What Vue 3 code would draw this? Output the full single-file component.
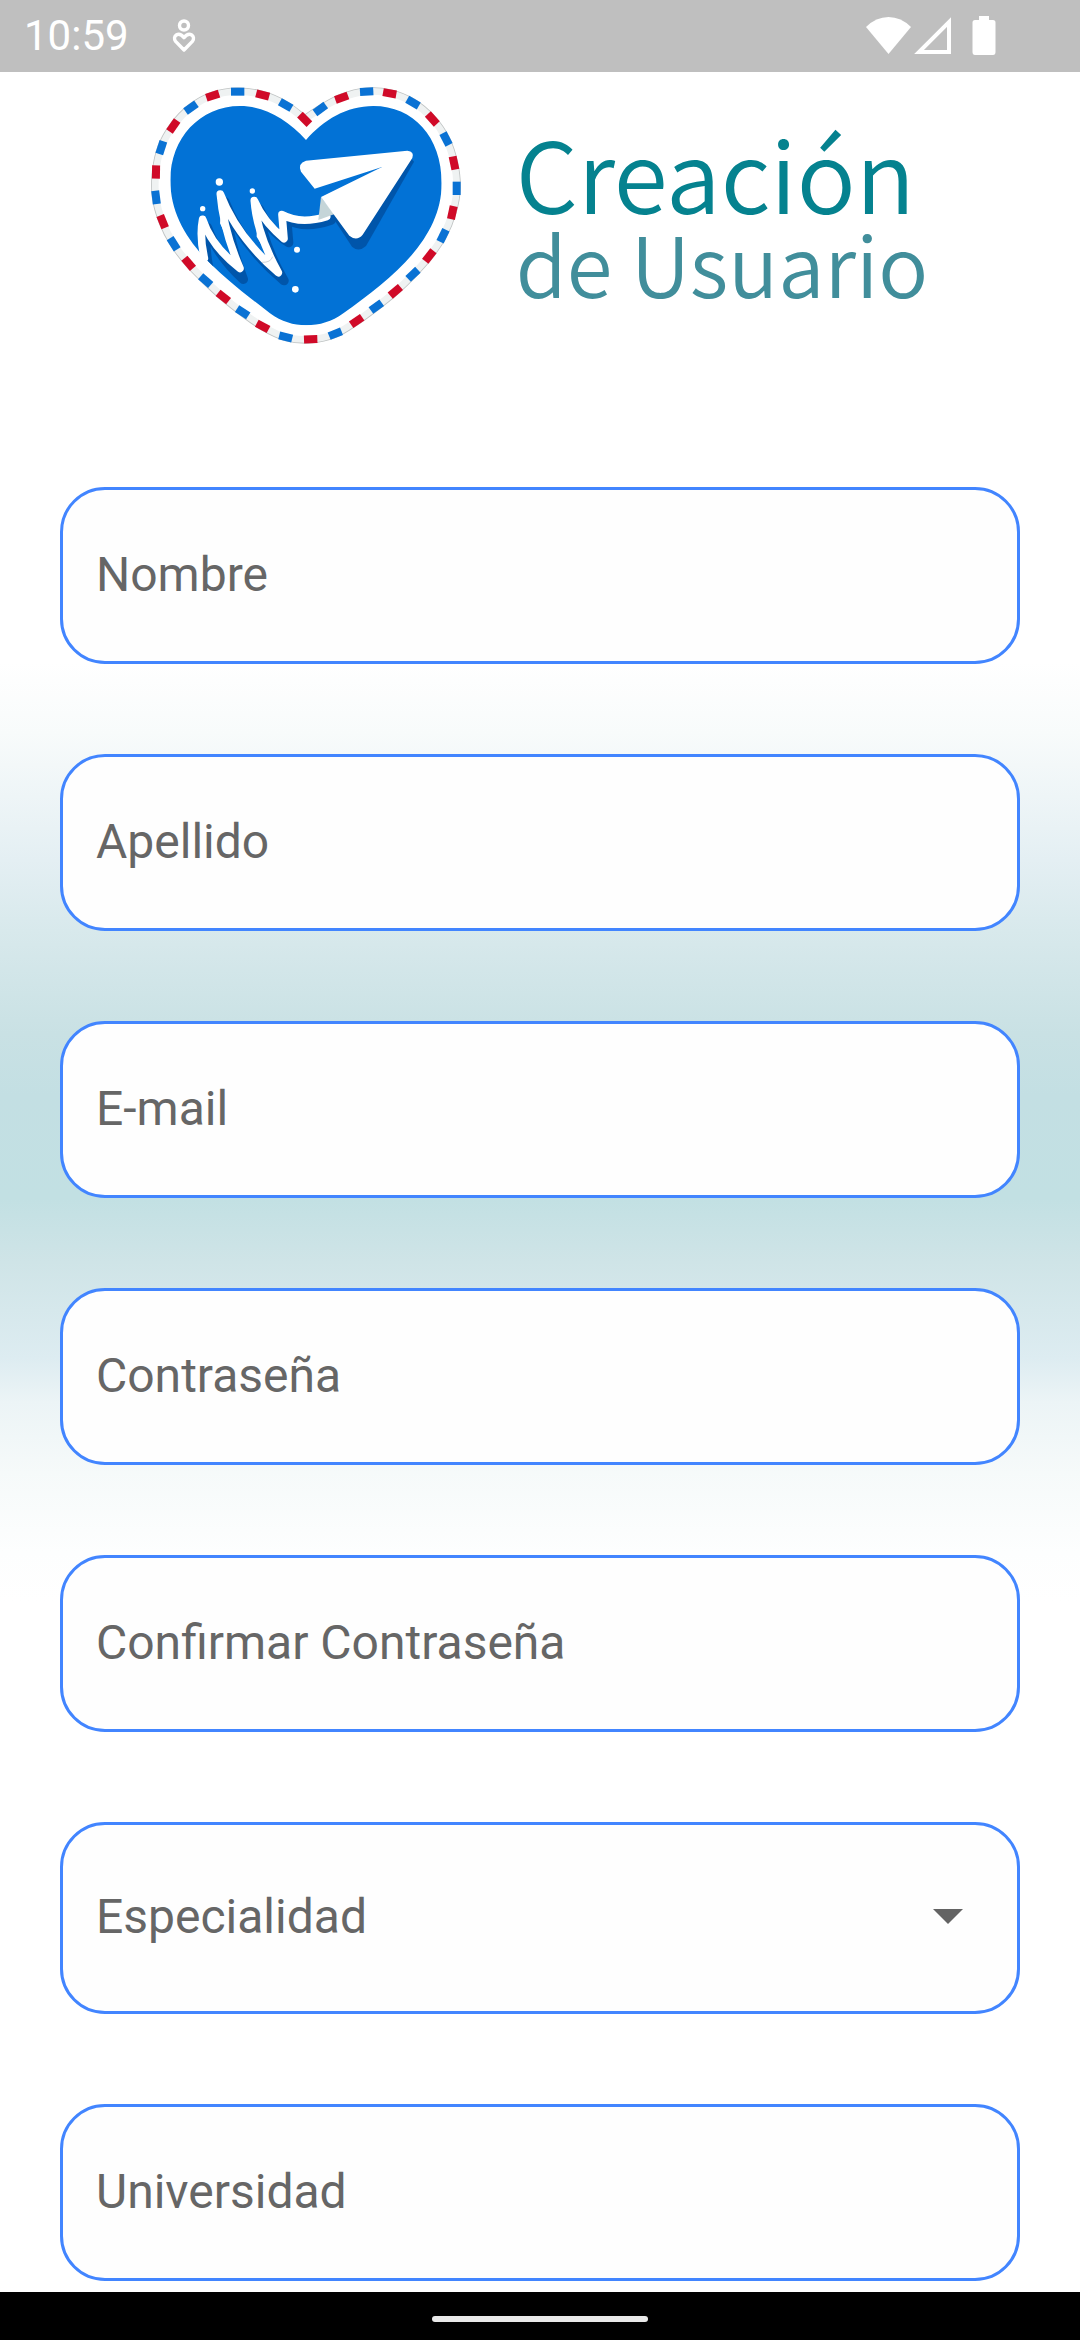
<script setup>
import { reactive } from 'vue'

const fields = [
  { id: 'nombre', label: 'Nombre', type: 'text' },
  { id: 'apellido', label: 'Apellido', type: 'text' },
  { id: 'email', label: 'E-mail', type: 'email' },
  { id: 'clave', label: 'Contraseña', type: 'password' },
  { id: 'clave2', label: 'Confirmar Contraseña', type: 'password' },
  { id: 'especialidad', label: 'Especialidad', type: 'select' },
  { id: 'universidad', label: 'Universidad', type: 'text' },
]

const form = reactive(Object.fromEntries(fields.map((f) => [f.id, ''])))

// Airmail stripes round the heart, clockwise from the notch: x, y, angle
const stripes = [
  [494, 148, 45], [541, 117, -36], [605, 83, -20], [680, 65, -3], [749, 70, 10],
  [819, 98, 30], [877, 147, 48], [918, 207, 63], [942, 279, 78], [950, 355, 90],
  [937, 428, 102], [909, 497, 116], [868, 558, -52], [819, 613, -43], [766, 664, -40],
  [709, 710, -36], [650, 753, -34], [586, 791, -22], [512, 808, -2], [437, 801, 14],
  [368, 769, 28], [308, 727, 33], [250, 681, 38], [197, 632, 41], [146, 580, 50],
  [101, 521, 58], [68, 455, 68], [48, 382, 83], [48, 306, 91], [64, 233, 108],
  [100, 168, -55], [153, 113, -35], [218, 77, -18], [293, 65, 0], [368, 75, 15],
  [437, 105, 30],
]

// Smooth curve through the stripe centres, with a sharp corner at the notch
function ribbon(points) {
  const p = [...points, points[0]]
  let d = `M${p[0][0]} ${p[0][1]}`
  for (let i = 0; i < p.length - 1; i++) {
    const a = p[Math.max(i - 1, 0)]
    const b = p[i]
    const c = p[i + 1]
    const e = p[Math.min(i + 2, p.length - 1)]
    d += `C${b[0] + (c[0] - a[0]) / 6} ${b[1] + (c[1] - a[1]) / 6} ${c[0] - (e[0] - b[0]) / 6} ${c[1] - (e[1] - b[1]) / 6} ${c[0]} ${c[1]}`
  }
  return d
}
const ribbonPath = ribbon(stripes)
</script>

<template>
  <div class="screen">
    <header class="status">
      <time class="clock">10:59</time>
      <svg class="person" viewBox="0 0 24 34" fill="none" stroke="#fff" stroke-width="3.4" aria-hidden="true">
        <circle cx="12" cy="6.5" r="4.5" />
        <path d="M12 31 L3.6 22.4 C-.2 17.5 6.4 11.5 12 18.6 C17.6 11.5 24.2 17.5 20.4 22.4 Z" stroke-linejoin="round" />
      </svg>
      <div class="signals">
        <svg width="46" height="40" viewBox="0 0 46 40" fill="#fff" aria-hidden="true">
          <path d="M0 11 Q10 1 22.5 1 Q35 1 45 11 L22.5 38 Z" />
        </svg>
        <svg width="40" height="40" viewBox="-2 0 40 40" fill="none" stroke="#fff" stroke-width="4" aria-hidden="true">
          <path d="M5 36 L35 36 L35 6 Z" />
        </svg>
        <svg class="battery" width="24" height="40" viewBox="0 0 24 40" fill="#fff" aria-hidden="true">
          <path d="M7 0 H17 V4 H21 Q23.5 4 23.5 6.5 V36 Q23.5 39 21 39 H3 Q.5 39 .5 36 V6.5 Q.5 4 3 4 H7 Z" />
        </svg>
      </div>
    </header>

    <main class="page">
      <div class="brand">
        <svg class="heart" viewBox="0 6 1020 870" role="img" aria-label="Corazón con avión de papel">
          <defs>
            <clipPath id="heart-clip">
              <path d="M498 210C440 145 370 108 300 108C180 108 91 205 91 330C91 510 250 620 390 730C425 755 460 766 498 766C540 766 575 755 610 730C750 630 905 510 905 340C905 200 820 108 700 108C620 108 550 150 498 210Z" />
            </clipPath>
          </defs>
          <path :d="ribbonPath" fill="#fff" stroke="#bfc3c3" stroke-width="25" />
          <path :d="ribbonPath" fill="#fff" stroke="#eff2f2" stroke-width="20" />
          <rect
            v-for="(s, i) in stripes"
            :key="i"
            :x="s[0] - 20"
            :y="s[1] - 12"
            width="40"
            height="24"
            :fill="i % 2 ? '#0a72d4' : '#d00a28'"
            :transform="`rotate(${s[2]} ${s[0]} ${s[1]})`"
          />
          <g clip-path="url(#heart-clip)">
            <rect width="1020" height="870" fill="#0272d6" />
            <path d="M206 592Q192 524 202 472Q229 554 310 628Q264 504 255 396Q304 524 432 632Q364 514 357 416Q384 479 446 518L440 448Q494 478 574 450" fill="none" stroke="#0055aa" stroke-width="28" stroke-linejoin="round" stroke-linecap="round" />
            <path d="M570 430L636 530Q656 548 678 528L822 275L800 250Z" fill="#0055aa" />
          </g>
          <path d="M193 564Q178 500 188 448Q215 530 300 595Q250 480 241 372Q290 500 415 608Q350 490 343 392Q370 455 432 506L426 434Q480 464 560 440" fill="none" stroke="#fff" stroke-width="23" stroke-linejoin="round" stroke-linecap="round" />
          <path d="M246 400L300 590L240 460ZM350 425L410 600L350 500Z" fill="#fff" />
          <path d="M366 577Q392 578 398 560" fill="none" stroke="#b8bfc4" stroke-width="2" />
          <path d="M543 381L535 450L584 432Z" fill="#c5d5d8" />
          <path d="M498 272L802 242Q824 244 817 264L668 494Q650 515 628 497L543 381L726 291L524 356L483 305Q472 280 498 272Z" fill="#fff" />
          <g fill="#fff">
            <circle cx="238" cy="336" r="11" />
            <circle cx="188" cy="416" r="8" />
            <circle cx="337" cy="363" r="8" />
            <circle cx="471" cy="539" r="9" />
            <circle cx="466" cy="658" r="10" />
          </g>
        </svg>
        <h1 class="title">
          <span class="line-one">Creación</span>
          <span class="line-two">de Usuario</span>
        </h1>
      </div>

      <form class="form" @submit.prevent>
        <template v-for="f in fields" :key="f.id">
          <div v-if="f.type === 'select'" class="picker">
            <select :id="f.id" v-model="form[f.id]" class="box tall" :aria-label="f.label">
              <option value="">{{ f.label }}</option>
            </select>
            <svg class="arrow" viewBox="0 0 30 15" aria-hidden="true"><path d="M0 0H30L15 15Z" fill="#636363" /></svg>
          </div>
          <input v-else :id="f.id" v-model="form[f.id]" class="box" :type="f.type" :placeholder="f.label" :aria-label="f.label" />
        </template>
      </form>
    </main>

    <footer class="navbar"><span class="pill"></span></footer>
  </div>
</template>

<style>
body {
  margin: 0;
}
</style>

<style scoped>
.screen {
  display: flex;
  flex-direction: column;
  min-height: 100vh;
  font-family: Roboto, sans-serif;
  background: #fff;
}

.status {
  display: flex;
  align-items: center;
  height: 72px;
  padding: 0 84px 0 24px;
  background: #bfbfbf;
  color: #fff;
}

.clock {
  font-size: 42px;
  line-height: 72px;
}

.person {
  width: 24px;
  height: 34px;
  margin-left: 43px;
}

.signals {
  display: flex;
  align-items: center;
  margin-left: auto;
}

.battery {
  margin-left: 20px;
}

.page {
  flex: 1;
  background: linear-gradient(
    #fff 590px,
    #f8fbfb 661px,
    #e4eff3 788px,
    #d8e9ec 859px,
    #c9e1e4 961px,
    #c3dfe3 1024px,
    #c2e0e3 1126px,
    #cfe4e7 1190px,
    #ddecf1 1286px,
    #ecf4f6 1330px,
    #f6fafa 1401px,
    #fdfefe 1480px,
    #fff 1530px
  );
}

.brand {
  display: flex;
  justify-content: center;
  gap: 36px;
  box-sizing: border-box;
  height: 415px;
  padding-right: 12px;
}

.heart {
  width: 340px;
  height: 290px;
}

.title {
  display: flex;
  flex-direction: column;
  margin: 49px 0 0;
  font-family: "Noto Sans CJK SC", "Noto Sans", sans-serif;
  font-weight: 350;
}

.line-one {
  font-size: 98px;
  line-height: 100px;
  color: #05828f;
}

.line-two {
  font-size: 83px;
  line-height: 82px;
  color: #418e9b;
}

.form {
  display: flex;
  flex-direction: column;
  gap: 90px;
  padding: 0 60px 11px;
}

.box {
  display: block;
  box-sizing: border-box;
  width: 100%;
  height: 177px;
  padding: 0 33px 2px;
  border: 3px solid #4285ff;
  border-radius: 45px;
  outline: none;
  appearance: none;
  background: #fefefe;
  color: #666;
  font-family: inherit;
  font-size: 48px;
}

.box::placeholder {
  color: #666;
  opacity: 1;
}

.tall {
  height: 192px;
  padding-bottom: 4px;
}

.picker {
  position: relative;
}

.arrow {
  position: absolute;
  top: 50%;
  right: 57px;
  width: 30px;
  height: 15px;
  margin-top: -9px;
  pointer-events: none;
}

.navbar {
  display: flex;
  align-items: center;
  justify-content: center;
  height: 48px;
  padding-top: 6px;
  box-sizing: border-box;
  background: #000;
}

.pill {
  width: 20%;
  height: 6px;
  border-radius: 3px;
  background: #e9e9e9;
}
</style>
